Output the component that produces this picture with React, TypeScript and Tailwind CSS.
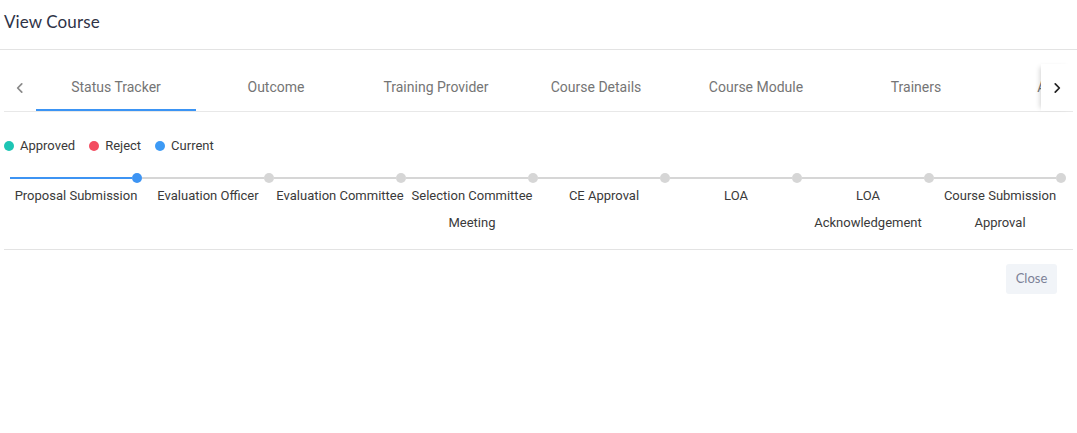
import React from 'react';

const tabs = ['Status Tracker', 'Outcome', 'Training Provider', 'Course Details', 'Course Module', 'Trainers', 'Assessment'];

const steps = [
  'Proposal Submission',
  'Evaluation Officer',
  'Evaluation Committee',
  'Selection Committee Meeting',
  'CE Approval',
  'LOA',
  'LOA Acknowledgement',
  'Course Submission Approval',
];

const Chevron: React.FC<{ dir: 'left' | 'right'; className?: string }> = ({ dir, className }) => (
  <svg viewBox="0 0 24 24" className={className} fill="none" stroke="currentColor" strokeWidth="3" strokeLinecap="round" strokeLinejoin="round">
    {dir === 'left' ? <path d="M15 5l-7 7 7 7" /> : <path d="M9 5l7 7-7 7" />}
  </svg>
);

const App: React.FC = () => {
  const current = 0;

  return (
    <div className="w-[1077px] h-[433px] bg-white font-['Roboto',sans-serif]">
      <div className="h-[50px] border-b border-[#e3e3e3] flex items-center px-[4px]">
        <h2 className="text-[17px] text-[#2f3347] font-['Lato',sans-serif] tracking-[0.1px] pb-[5px]">View Course</h2>
      </div>

      <div className="px-[4px]">
        {/* tabs */}
        <div className="mt-[14px] h-[48px] flex border-b border-[#e8e8e8] relative">
          <button className="w-[32px] shrink-0 flex items-center justify-center text-[#8a8a8a]">
            <Chevron dir="left" className="w-[14px] h-[14px]" />
          </button>
          <div className="flex-1 flex overflow-hidden">
            {tabs.map((t, i) => (
              <div
                key={t}
                className={`w-[160px] shrink-0 flex items-center justify-center text-[14px] text-[#757575] ${
                  i === 0 ? 'shadow-[inset_0_-2px_0_#3b94f4]' : ''
                }`}
              >
                {t}
              </div>
            ))}
          </div>
          <button className="w-[32px] shrink-0 flex items-center justify-center text-[#222] bg-white shadow-[-4px_0_5px_-3px_rgba(0,0,0,0.18)]">
            <Chevron dir="right" className="w-[14px] h-[14px]" />
          </button>
        </div>

        {/* legend */}
        <div className="flex items-center gap-[14px] mt-[24px] text-[13px] text-[#3a3a3a]">
          <div className="flex items-center gap-[6px]">
            <span className="w-[10px] h-[10px] rounded-full bg-[#1dc5b4]" />
            Approved
          </div>
          <div className="flex items-center gap-[6px]">
            <span className="w-[10px] h-[10px] rounded-full bg-[#f34c60]" />
            Reject
          </div>
          <div className="flex items-center gap-[6px]">
            <span className="w-[10px] h-[10px] rounded-full bg-[#3d9af5]" />
            Current
          </div>
        </div>

        {/* stepper */}
        <div className="flex pl-[6px] mt-[16px] pb-[13px] border-b border-[#e3e3e3]">
          {steps.map((s, i) => (
            <div key={s} className="w-[132px] shrink-0">
              <div className="h-[12px] flex items-center">
                <div className={`flex-1 h-[2px] ${i <= current ? 'bg-[#3d94f3]' : 'bg-[#d6d6d6]'}`} />
                <span className={`w-[10px] h-[10px] rounded-full ${i === current ? 'bg-[#3d94f3]' : 'bg-[#d6d6d6]'}`} />
              </div>
              <div className="text-center text-[13px] leading-[27px] text-[#3a3a3a] mt-[-2px]">{s}</div>
            </div>
          ))}
        </div>

        <div className="flex justify-end pt-[14px] pr-[16px]">
          <button className="w-[51px] h-[30px] rounded-[3px] bg-[#f1f4f8] text-[13px] text-[#7c8197] font-['Lato',sans-serif]">
            Close
          </button>
        </div>
      </div>
    </div>
  );
};

export default App;
